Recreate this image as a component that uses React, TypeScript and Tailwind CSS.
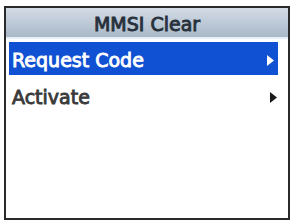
export default function App() {
  const items = [
    { label: 'Request Code', selected: true },
    { label: 'Activate', selected: false },
  ]

  return (
    <div className="w-[290px] h-[220px] bg-white pl-[4px] pt-[6px] font-['DejaVu_Sans',sans-serif]">
      <div className="w-[286px] h-[214px] border-2 border-[#2a2a2a] bg-white flex flex-col">
        {/* title bar */}
        <div className="h-[31px] flex items-center justify-center pt-[3px] bg-gradient-to-b from-[#d3dce6] to-[#a9b8c8] border-b-2 border-[#e4f0fa]">
          <span className="text-[19px] leading-none text-[#27313c] [-webkit-text-stroke:0.9px_#27313c]">MMSI Clear</span>
        </div>

        <div className="flex flex-col pt-[3px] pl-[3px] pr-[10px]">
          {items.map((item) => (
            <div
              key={item.label}
              className={
                item.selected
                  ? 'h-[33px] flex items-center justify-between bg-[#1050d2] pt-[3px] pl-[3px] pr-[4px] mb-[3px]'
                  : 'h-[36px] flex items-center justify-between pt-[3px] pl-[3px] pr-[1px]'
              }
            >
              <span
                className={
                  item.selected
                    ? 'text-[19px] leading-none text-white [-webkit-text-stroke:0.9px_#ffffff]'
                    : 'text-[19px] leading-none text-[#3a3a3a] [-webkit-text-stroke:0.9px_#3a3a3a]'
                }
              >
                {item.label}
              </span>
              <svg width="7" height="11" viewBox="0 0 7 11">
                <path d="M0 0 L7 5.5 L0 11 Z" fill={item.selected ? '#ffffff' : '#1a1a1a'} />
              </svg>
            </div>
          ))}
        </div>
      </div>
    </div>
  )
}
